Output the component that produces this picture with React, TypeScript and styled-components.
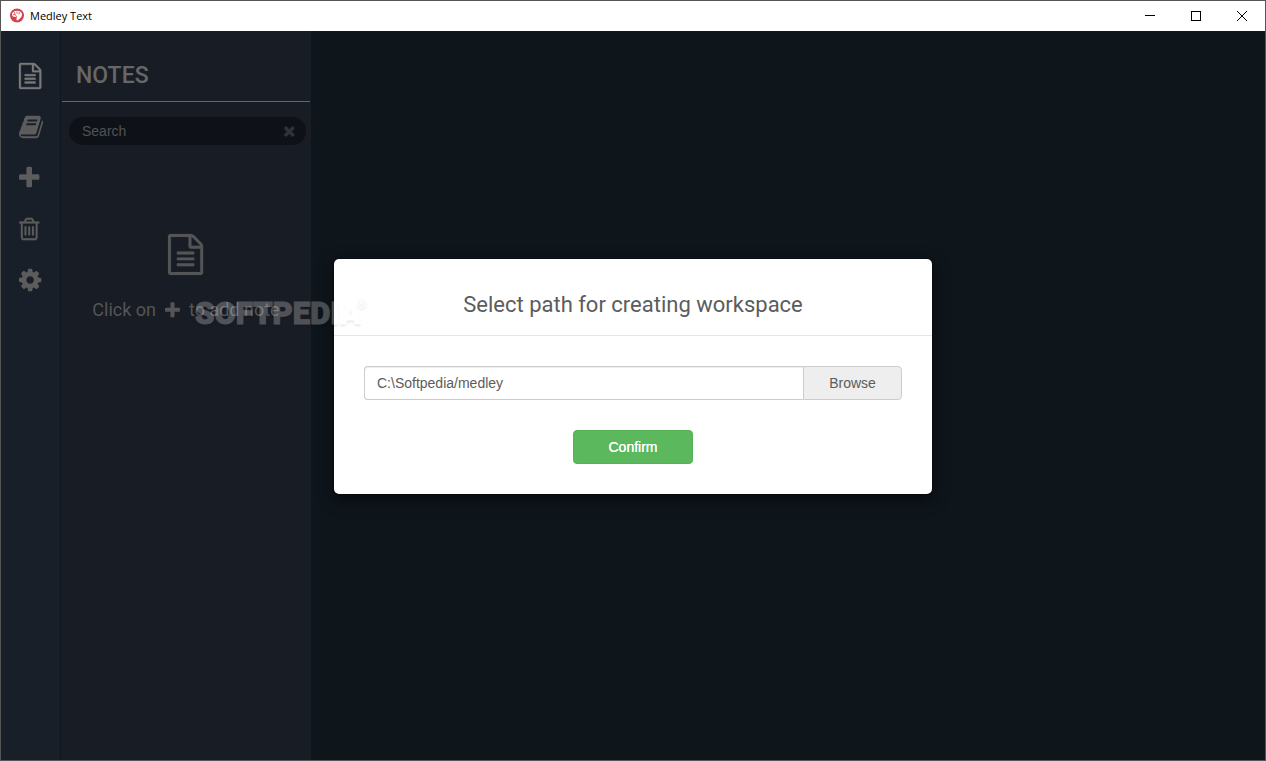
import React from 'react';
import styled, { createGlobalStyle } from 'styled-components';

const roboto = "Roboto, 'Liberation Sans', sans-serif";
const arial = "'Liberation Sans', Arial, sans-serif";

const GlobalStyle = createGlobalStyle`
  *, *::before, *::after { box-sizing: border-box; }
  body { margin: 0; font-family: ${arial}; font-size: 14px; }
  h1, h2, p { margin: 0; }
  button, input { font: inherit; }
`;

const Window = styled.div`
  display: flex;
  flex-direction: column;
  min-height: 100vh;
  border: 1px solid #555;
  background: #0e151b;
  overflow: hidden;
  position: relative;
`;

const TitleBar = styled.header`
  display: flex;
  align-items: center;
  height: 30px;
  padding-left: 8px;
  background: #fff;
`;

const AppName = styled.span`
  flex: 1;
  margin-left: 5px;
  font: 11px/16px 'Open Sans', 'Noto Sans', sans-serif;
  color: #000;
`;

const WindowButton = styled.button`
  display: flex;
  align-items: center;
  justify-content: center;
  width: 46px;
  height: 30px;
  padding: 0;
  border: 0;
  background: none;
`;

const Body = styled.div`
  display: flex;
  flex: 1;
`;

const Rail = styled.nav`
  display: flex;
  flex-direction: column;
  gap: 25px;
  flex: 0 0 60px;
  padding: 32px 0 0 18px;
  border-right: 1px solid #12161f;
  background: #181f29;
`;

const RailButton = styled.button<{ $active?: boolean }>`
  display: flex;
  padding: 0;
  border: 0;
  background: none;
  color: ${(p) => (p.$active ? '#7a7a7a' : '#5c5c5c')};
`;

const Panel = styled.aside`
  display: flex;
  flex-direction: column;
  flex: 0 0 250px;
  background: #181c24;
`;

const PanelTitle = styled.h1`
  margin: 0 1px;
  padding: 28px 14px 9px;
  border-bottom: 1px solid #66686c;
  font: 500 23px/33px ${roboto};
  color: #666769;
`;

const SearchBox = styled.div`
  display: flex;
  align-items: center;
  height: 28px;
  margin: 15px 5px 0 8px;
  padding: 0 11px 0 13px;
  border-radius: 14px;
  background: #0e1218;
  color: #303236;
`;

const SearchInput = styled.input`
  flex: 1;
  min-width: 0;
  padding: 0;
  border: 0;
  outline: 0;
  background: none;
  line-height: 20px;
  color: #505254;
  &::placeholder { color: #505254; opacity: 1; }
`;

const ClearButton = styled.button`
  display: flex;
  padding: 0;
  border: 0;
  background: none;
  color: inherit;
`;

const EmptyState = styled.section`
  display: flex;
  flex-direction: column;
  align-items: center;
  margin-top: 89px;
  color: #545557;
`;

const EmptyHint = styled.p`
  display: flex;
  align-items: center;
  gap: 9px;
  margin-top: 22px;
  font: 18px/26px ${roboto};
`;

const Overlay = styled.div`
  position: absolute;
  inset: 30px 0 0;
  display: flex;
  justify-content: center;
  align-items: flex-start;
  padding: 227px 16px 16px;
`;

const Dialog = styled.form`
  width: 100%;
  max-width: 600px;
  border: 1px solid rgba(0, 0, 0, 0.2);
  border-radius: 6px;
  background: #fff;
  background-clip: padding-box;
  box-shadow: 0 5px 15px rgba(0, 0, 0, 0.5);
  color: #5c5c5c;
`;

const DialogTitle = styled.h2`
  padding: 31px 15px 15px;
  border-bottom: 1px solid #e5e5e5;
  font: 400 22px/30px ${roboto};
  text-align: center;
`;

const DialogBody = styled.div`
  display: flex;
  flex-direction: column;
  align-items: center;
  gap: 30px;
  padding: 30px;
`;

const PathField = styled.div`
  display: flex;
  width: 100%;
`;

const PathInput = styled.input`
  flex: 1;
  min-width: 0;
  height: 34px;
  padding: 6px 12px;
  border: 1px solid #ccc;
  border-right: 0;
  border-radius: 4px 0 0 4px;
  outline: 0;
  box-shadow: inset 0 1px 1px rgba(0, 0, 0, 0.075);
  color: #5c5c5c;
`;

const BrowseButton = styled.button`
  width: 99px;
  height: 34px;
  padding: 0;
  border: 1px solid #ccc;
  border-radius: 0 4px 4px 0;
  background: #eee;
  color: #5c5c5c;
`;

const ConfirmButton = styled.button`
  width: 120px;
  height: 34px;
  padding: 0;
  border: 1px solid #54b254;
  border-radius: 4px;
  background: #5cb85c;
  color: #fff;
  text-shadow: 0 0 0 #fff;
`;

const Watermark = styled.div`
  position: absolute;
  left: 194px;
  top: 295px;
  display: flex;
  align-items: flex-start;
  font: 900 31px/36px ${roboto};
  color: #fff;
  -webkit-text-stroke: 1px #fff;
  text-shadow: 0 2px 2px rgba(0, 0, 0, 0.4);
  opacity: 0.24;
  pointer-events: none;
`;

const Registered = styled.span`
  margin-left: -4px;
  font: 700 12px/16px ${roboto};
  -webkit-text-stroke: 0;
`;

const ICONS = {
  file: {
    box: [0, 1536],
    d: 'M1468 380q28 28 48 76t20 88v1152q0 40-28 68t-68 28h-1344q-40 0-68-28t-28-68v-1600q0-40 28-68t68-28h896q40 0 88 20t76 48zm-444-244v376h376q-10-29-22-41l-313-313q-12-12-41-22zm384 1528v-1024h-416q-40 0-68-28t-28-68v-416h-768v1536h1280zm-1024-864q0-14 9-23t23-9h704q14 0 23 9t9 23v64q0 14-9 23t-23 9h-704q-14 0-23-9t-9-23v-64zm736 224q14 0 23 9t9 23v64q0 14-9 23t-23 9h-704q-14 0-23-9t-9-23v-64q0-14 9-23t23-9h704zm0 256q14 0 23 9t9 23v64q0 14-9 23t-23 9h-704q-14 0-23-9t-9-23v-64q0-14 9-23t23-9h704z',
  },
  book: {
    box: [64, 1664],
    d: 'M1703 478q40 57 18 129l-275 906q-19 64-76.5 107.5t-122.5 43.5h-923q-77 0-148.5-53.5t-99.5-131.5q-24-67-2-127 0-4 3-27t4-37q1-8-3-21.5t-3-19.5q2-11 8-21t16.5-23.5 16.5-23.5q23-38 45-91.5t30-91.5q3-10 .5-30t-.5-28q3-11 17-28t17-23q21-36 42-92t25-90q1-9-2.5-32t.5-28q4-13 22-30.5t22-22.5q19-26 42.5-84.5t27.5-96.5q1-8-3-25.5t-2-26.5q2-8 9-18t18-23 17-21q8-12 16.5-30.5t15-35 16-36 19.5-32 26.5-23.5 36-11.5 47.5 5.5l-1 3q38-9 51-9h761q74 0 114 56t18 130l-274 906q-36 119-71.5 153.5t-128.5 34.5h-869q-27 0-38 15-11 16-1 43 24 70 144 70h923q29 0 56-15.5t35-41.5l300-987q7-22 5-57 38 15 59 43zm-1064 2q-4 13 2 22.5t20 9.5h608q13 0 25.5-9.5t16.5-22.5l21-64q4-13-2-22.5t-20-9.5h-608q-13 0-25.5 9.5t-16.5 22.5zm-83 256q-4 13 2 22.5t20 9.5h608q13 0 25.5-9.5t16.5-22.5l21-64q4-13-2-22.5t-20-9.5h-608q-13 0-25.5 9.5t-16.5 22.5z',
  },
  plus: {
    box: [192, 1408],
    d: 'M1600 736v192q0 40-28 68t-68 28h-416v416q0 40-28 68t-68 28h-192q-40 0-68-28t-28-68v-416h-416q-40 0-68-28t-28-68v-192q0-40 28-68t68-28h416v-416q0-40 28-68t68-28h192q40 0 68 28t28 68v416h416q40 0 68 28t28 68z',
  },
  trash: {
    box: [192, 1408],
    d: 'M704 736v576q0 14-9 23t-23 9h-64q-14 0-23-9t-9-23v-576q0-14 9-23t23-9h64q14 0 23 9t9 23zm256 0v576q0 14-9 23t-23 9h-64q-14 0-23-9t-9-23v-576q0-14 9-23t23-9h64q14 0 23 9t9 23zm256 0v576q0 14-9 23t-23 9h-64q-14 0-23-9t-9-23v-576q0-14 9-23t23-9h64q14 0 23 9t9 23zm128 724v-948h-896v948q0 22 7 40.5t14.5 27 10.5 8.5h832q3 0 10.5-8.5t14.5-27 7-40.5zm-672-1076h448l-48-117q-7-9-17-11h-317q-10 2-17 11zm928 32v64q0 14-9 23t-23 9h-96v948q0 83-47 143.5t-113 60.5h-832q-66 0-113-58.5t-47-141.5v-952h-96q-14 0-23-9t-9-23v-64q0-14 9-23t23-9h309l70-167q15-37 54-63t79-26h320q40 0 79 26t54 63l70 167h309q14 0 23 9t9 23z',
  },
  cog: {
    box: [128, 1536],
    d: 'M1152 896q0-106-75-181t-181-75-181 75-75 181 75 181 181 75 181-75 75-181zm512-109v222q0 12-8 23t-20 13l-185 28q-19 54-39 91 35 50 107 138 10 12 10 25t-9 23q-27 37-99 108t-94 71q-12 0-26-9l-138-108q-44 23-91 38-16 136-29 186-7 28-36 28h-222q-14 0-24.5-8.5t-11.5-21.5l-28-184q-49-16-90-37l-141 107q-10 9-25 9-14 0-25-11-126-114-165-168-7-10-7-23 0-12 8-23 15-21 51-66.5t54-70.5q-27-50-41-99l-183-27q-13-2-21-12.5t-8-23.5v-222q0-12 8-23t19-13l186-28q14-46 39-92-40-57-107-138-10-12-10-24 0-10 9-23 26-36 98.5-107.5t94.5-71.5q13 0 26 10l138 107q44-23 91-38 16-136 29-186 7-28 36-28h222q14 0 24.5 8.5t11.5 21.5l28 184q49 16 90 37l142-107q9-9 24-9 13 0 25 10 129 119 165 170 7 8 7 22 0 12-8 23-15 21-51 66.5t-54 70.5q26 50 41 98l183 28q13 2 21 12.5t8 23.5z',
  },
  times: {
    box: [302, 1188],
    d: 'M1490 1322q0 40-28 68l-136 136q-28 28-68 28t-68-28l-294-294-294 294q-28 28-68 28t-68-28l-136-136q-28-28-28-68t28-68l294-294-294-294q-28-28-28-68t28-68l136-136q28-28 68-28t68 28l294 294 294-294q28-28 68-28t68 28l136 136q28 28 28 68t-28 68l-294 294 294 294q28 28 28 68z',
  },
};

type IconName = keyof typeof ICONS;

const Glyph = styled.svg<{ $weight: number }>`
  overflow: visible;
  fill: currentColor;
  stroke: currentColor;
  stroke-width: ${(p) => p.$weight};
`;

function Icon({ name, size, weight = 0 }: { name: IconName; size: number; weight?: number }) {
  const { box, d } = ICONS[name];
  return (
    <Glyph
      $weight={weight}
      width={(size * box[1]) / 1792}
      height={size}
      viewBox={`${box[0]} 0 ${box[1]} 1792`}
      aria-hidden="true"
    >
      <path d={d} />
    </Glyph>
  );
}

const RAIL: { name: IconName; label: string; weight?: number }[] = [
  { name: 'file', label: 'Notes', weight: 24 },
  { name: 'book', label: 'Notebooks' },
  { name: 'plus', label: 'Add' },
  { name: 'trash', label: 'Trash', weight: 12 },
  { name: 'cog', label: 'Settings' },
];

export default function App() {
  return (
    <>
      <GlobalStyle />
      <Window>
        <TitleBar>
          <svg width="16" height="16" viewBox="0 0 16 16" aria-hidden="true">
            <circle cx="8" cy="7.5" r="7" fill="#cf4450" />
            <path
              d="M3 6.4C3 4.8 4.2 3.6 5.6 3.2L8 2.8l2.4.4C12 3.8 13 5 13 6.6c0 2-1.2 3.4-2.6 4.4L8.4 12.6 7.4 12l.4-2.8L5.2 8.8 3.4 8.2z"
              fill="#fff"
            />
            <path
              d="M5.4 4l.6 2.2M4 6.8l2.2-.4 1.6 2.8M7.8 3.4l.4 2.4M10.4 4L9.8 6.4"
              stroke="#cf4450"
              strokeWidth="0.8"
              fill="none"
            />
          </svg>
          <AppName>Medley Text</AppName>
          <WindowButton aria-label="Minimize">
            <svg width="10" height="10" shapeRendering="crispEdges"><path d="M0 4.5h10" stroke="#000" /></svg>
          </WindowButton>
          <WindowButton aria-label="Maximize">
            <svg width="10" height="10" shapeRendering="crispEdges"><path d="M.5 .5h9v9h-9z" stroke="#000" fill="none" /></svg>
          </WindowButton>
          <WindowButton aria-label="Close">
            <svg width="10" height="10"><path d="M0 0l10 10M10 0L0 10" stroke="#000" /></svg>
          </WindowButton>
        </TitleBar>
        <Body>
          <Rail>
            {RAIL.map(({ name, label, weight }, i) => (
              <RailButton key={name} $active={i === 0} aria-label={label}>
                <Icon name={name} size={26} weight={weight} />
              </RailButton>
            ))}
          </Rail>
          <Panel>
            <PanelTitle>NOTES</PanelTitle>
            <SearchBox>
              <SearchInput type="text" placeholder="Search" aria-label="Search" />
              <ClearButton aria-label="Clear search"><Icon name="times" size={16} /></ClearButton>
            </SearchBox>
            <EmptyState>
              <Icon name="file" size={41} weight={8} />
              <EmptyHint>
                <span>Click on</span>
                <Icon name="plus" size={19} />
                <span>to add note</span>
              </EmptyHint>
            </EmptyState>
          </Panel>
        </Body>
        <Overlay>
          <Dialog role="dialog" aria-labelledby="dialog-title" onSubmit={(e) => e.preventDefault()}>
            <DialogTitle id="dialog-title">Select path for creating workspace</DialogTitle>
            <DialogBody>
              <PathField>
                <PathInput type="text" aria-label="Workspace path" defaultValue="C:\Softpedia/medley" />
                <BrowseButton type="button">Browse</BrowseButton>
              </PathField>
              <ConfirmButton type="submit">Confirm</ConfirmButton>
            </DialogBody>
          </Dialog>
        </Overlay>
        <Watermark>
          SOFTPEDIA<Registered>®</Registered>
        </Watermark>
      </Window>
    </>
  );
}
